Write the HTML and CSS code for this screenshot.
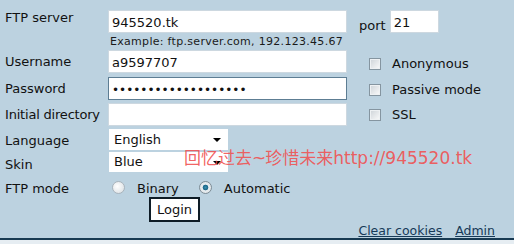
FILE: index.html
```html
<!DOCTYPE html>
<html>
<head>
<meta charset="utf-8">
<link rel="stylesheet" href="styles.css">
</head>
<body>
<div class="panel">
  <div class="form">
    <div class="lbl r1">FTP server</div>
    <div class="cell r1"><input class="txt wide" type="text" value="945520.tk"></div>
    <div class="cell r1 portcell"><span class="port">port</span><input class="txt portin" type="text" value="21"></div>

    <div class="cell r2 example">Example: ftp.server.com, 192.123.45.67</div>

    <div class="lbl r3">Username</div>
    <div class="cell r3"><input class="txt wide" type="text" value="a9597707"></div>
    <div class="cell r3 chk"><span class="box"></span><span>Anonymous</span></div>

    <div class="lbl r4">Password</div>
    <div class="cell r4"><input class="txt wide focus" type="password" value="aaaaaaaaaaaaaaaaaaa"></div>
    <div class="cell r4 chk"><span class="box"></span><span>Passive mode</span></div>

    <div class="lbl r5">Initial directory</div>
    <div class="cell r5"><input class="txt wide" type="text" value=""></div>
    <div class="cell r5 chk"><span class="box"></span><span>SSL</span></div>

    <div class="lbl r6">Language</div>
    <div class="cell r6"><div class="sel">English</div></div>

    <div class="lbl r7">Skin</div>
    <div class="cell r7"><div class="sel">Blue</div></div>

    <div class="lbl r8">FTP mode</div>
    <div class="cell r8 radios">
      <span class="radio"></span><span class="rlabel first">Binary</span>
      <span class="radio on"></span><span class="rlabel">Automatic</span>
    </div>

    <div class="cell r9 logincell"><button class="login">Login</button></div>
  </div>
  <div class="footer"><a href="#">Clear cookies</a><a href="#">Admin</a></div>
  <div class="watermark">回忆过去<span class="tilde">~</span>珍惜未来http://945520.tk</div>
</div>
</body>
</html>
```
FILE: styles.css
```css
html, body {
  margin: 0;
  padding: 0;
  background: #e6edf2;
}
body {
  font-family: "DejaVu Sans", Verdana, sans-serif;
  font-size: 13px;
  color: #111;
  width: 514px;
  height: 244px;
  overflow: hidden;
}
.panel {
  position: relative;
  height: 240px;
  box-sizing: border-box;
  background: #bcd2e0;
  border-bottom: 2px solid #183a52;
  overflow: hidden;
}
.form {
  display: grid;
  grid-template-columns: 103px 240px 1fr;
  grid-template-rows: 23px 17px 27px 26px 26px 24px 24px 20px 25px;
  padding: 10px 0 0 5px;
}
.r1 { grid-row: 1; }
.r2 { grid-row: 2; }
.r3 { grid-row: 3; }
.r4 { grid-row: 4; }
.r5 { grid-row: 5; }
.r6 { grid-row: 6; }
.r7 { grid-row: 7; }
.r8 { grid-row: 8; }
.r9 { grid-row: 9; }
.lbl {
  grid-column: 1;
  height: 23px;
  line-height: 23px;
  white-space: nowrap;
}
.lbl.r1 { line-height: 16px; }
.lbl.r5 { letter-spacing: -0.2px; }
.cell { display: flex; align-items: flex-start; }
.cell.r1, .cell.r3, .cell.r4, .cell.r5 { grid-column: 2; }
.cell.portcell, .cell.chk { grid-column: 3; }
.txt {
  box-sizing: border-box;
  height: 23px;
  border: 1px solid #cdd8e0;
  background: #fff;
  font-family: "DejaVu Sans", Verdana, sans-serif;
  font-size: 13px;
  color: #111;
  padding: 2px 3px 0 3px;
  margin: 0;
  outline: none;
}
.wide { width: 239px; }
.focus { border-color: #5d7d93; font-size: 12px; }
.portcell { padding-left: 11px; align-items: center; height: 23px; }
.port { margin-right: 4px; position: relative; top: 4px; }
.portin { width: 49px; }
.example {
  grid-column: 2 / 4;
  font-size: 11px;
  letter-spacing: 0.3px;
  line-height: 17px;
  padding-left: 2px;
  white-space: nowrap;
  color: #1a1a1a;
}
.chk {
  padding-left: 21px;
  height: 23px;
  align-items: center;
  gap: 11px;
}
.chk.r3 { margin-top: 2px; }
.chk.r4 { margin-top: 1px; }
.box {
  width: 10px;
  height: 10px;
  border: 1px solid #8595a0;
  background: linear-gradient(135deg, #cdd3d8, #fbfbfb);
  box-shadow: inset 0 0 0 1px #eef1f3;
}
.cell.r6, .cell.r7 { grid-column: 2; }
.sel {
  position: relative;
  box-sizing: border-box;
  width: 119px;
  height: 21px;
  background: #fff;
  padding-left: 5px;
  line-height: 21px;
  margin-left: 1px;
}
.sel::after {
  content: "";
  position: absolute;
  right: 7px;
  top: 9px;
  border-left: 4px solid transparent;
  border-right: 4px solid transparent;
  border-top: 4px solid #000;
}
.cell.r7 .sel { margin-top: -1px; height: 20px; line-height: 20px; }
.radios {
  grid-column: 2 / 4;
  align-items: center;
  height: 20px;
  padding-left: 4px;
  white-space: nowrap;
}
.radio {
  box-sizing: border-box;
  width: 13px;
  height: 13px;
  border-radius: 50%;
  border: 1px solid #a9b4bc;
  background: radial-gradient(circle at 40% 40%, #ffffff, #d6dce0);
}
.radio.on {
  background: radial-gradient(circle, #3a8fb0 0, #1c6688 2.5px, #e9eef1 3.2px, #d6dce0 100%);
  border-color: #7d8c96;
}
.rlabel { margin-left: 12px; position: relative; top: 1px; }
.rlabel.first { margin-right: 20px; }
.logincell { grid-column: 2; padding-left: 41px; }
.login {
  box-sizing: border-box;
  width: 51px;
  height: 25px;
  border: 2px solid #0e1c26;
  background: #fff;
  font-family: "DejaVu Sans", Verdana, sans-serif;
  font-size: 13px;
  color: #111;
  padding: 0;
  margin: 0;
}
.footer {
  display: flex;
  justify-content: flex-end;
  gap: 13px;
  padding-right: 19px;
  height: 16px;
  line-height: 17px;
  font-size: 12.5px;
}
.footer a {
  color: #173a58;
  text-decoration: underline;
}
.watermark {
  position: absolute;
  left: 184px;
  top: 144px;
  font-family: "DejaVu Sans", "Noto Sans CJK SC", sans-serif;
  font-size: 17px;
  color: rgba(240, 80, 80, 0.9);
  white-space: nowrap;
  pointer-events: none;
}
.tilde { letter-spacing: -3px; margin-right: 2px; }
```
